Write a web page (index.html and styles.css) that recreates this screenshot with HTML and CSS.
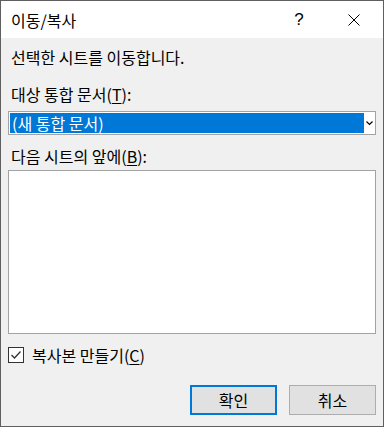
FILE: index.html
```html
<!DOCTYPE html>
<html>
<head>
    <meta charset="utf-8">
    <title>이동/복사</title>
    <link rel="stylesheet" href="styles.css">
</head>
<body>

<div class="dialog">
    <div class="titlebar">
        <span class="title">이동/복사</span>
        <span class="tb-help">?</span>
        <span class="tb-close">
            <svg width="12" height="12" viewBox="0 0 12 12">
                <path d="M0.5 0.5 L11.5 11.5 M11.5 0.5 L0.5 11.5" stroke="#000" stroke-width="1" fill="none"/>
            </svg>
        </span>
    </div>

    <div class="body">
        <div class="line intro">선택한 시트를 이동합니다.</div>

        <div class="line label1">대상 통합 문서(<u>T</u>):</div>
        <div class="combo">
            <div class="combo-value">(새 통합 문서)</div>
            <div class="combo-arrow">
                <svg width="7" height="5" viewBox="0 0 7 5">
                    <path d="M0.5 0.5 L3.5 3.5 L6.5 0.5" stroke="#000" stroke-width="1.2" fill="none"/>
                </svg>
            </div>
        </div>

        <div class="line label2">다음 시트의 앞에(<u>B</u>):</div>
        <div class="listbox"></div>

        <div class="check-row">
            <span class="checkbox">
                <svg width="14" height="14" viewBox="0 0 14 14">
                    <path d="M2.5 7 L5.5 10 L11.5 3.5" stroke="#333" stroke-width="1.3" fill="none"/>
                </svg>
            </span>
            <span class="check-label">복사본 만들기(<u>C</u>)</span>
        </div>

        <div class="buttons">
            <div class="btn btn-default">확인</div>
            <div class="btn">취소</div>
        </div>
    </div>
</div>

</body>
</html>
```

FILE: styles.css
```css
/* dialog */
html, body {
    margin: 0;
    padding: 0;
}

body {
    font-family: "Noto Sans CJK KR", "Noto Sans", sans-serif;
    font-size: 16px;
    color: #000;
    background: #f0f0f0;
}

.dialog {
    width: 384px;
    height: 427px;
    box-sizing: border-box;
    border: 1px solid #5f5f5f;
    background: #f0f0f0;
}

.titlebar {
    height: 37px;
    background: #fff;
    display: flex;
    align-items: center;
}

.title {
    padding-left: 10px;
    flex: 1;
    line-height: 20px;
}

.tb-help {
    width: 12px;
    text-align: center;
    margin-right: 43px;
    font-family: "Liberation Sans", sans-serif;
    font-size: 17px;
    line-height: 20px;
}

.tb-close {
    width: 12px;
    height: 12px;
    margin-right: 23px;
    margin-top: 1px;
}

.tb-close svg {
    display: block;
}

.body {
    padding: 0 7px;
}

.line {
    line-height: 20px;
    height: 20px;
}

.intro {
    margin-top: 9px;
    padding-left: 3px;
}

.label1 {
    margin-top: 17px;
    padding-left: 3px;
}

.label2 {
    margin-top: 11px;
    padding-left: 3px;
}

u {
    text-decoration: underline;
    text-underline-offset: 2px;
}

.combo {
    margin-top: 7px;
    height: 24px;
    box-sizing: border-box;
    border: 1px solid #a3a3a3;
    background: #fff;
    padding: 1px;
    display: flex;
}

.combo-value {
    width: 354px;
    height: 20px;
    background: #0078d7;
    color: #fff;
    line-height: 20px;
    padding-left: 2px;
    box-sizing: border-box;
}

.combo-arrow {
    flex: 1;
    display: flex;
    align-items: center;
    justify-content: center;
    padding-left: 1px;
}

.combo-arrow svg {
    display: block;
}

.listbox {
    margin-top: 4px;
    height: 164px;
    box-sizing: border-box;
    border: 1px solid #a3a3a3;
    background: #fff;
}

.check-row {
    margin-top: 13px;
    height: 16px;
    display: flex;
    align-items: center;
}

.checkbox {
    width: 16px;
    height: 16px;
    box-sizing: border-box;
    border: 1px solid #333;
    background: #fff;
}

.checkbox svg {
    display: block;
}

.check-label {
    margin-left: 8px;
    line-height: 20px;
}

.buttons {
    margin-top: 22px;
    display: flex;
    justify-content: flex-end;
    gap: 12px;
}

.btn {
    width: 87px;
    height: 30px;
    box-sizing: border-box;
    border: 1px solid #adadad;
    background: #e1e1e1;
    text-align: center;
    line-height: 28px;
}

.btn-default {
    border: 2px solid #0078d7;
    line-height: 26px;
}
```
